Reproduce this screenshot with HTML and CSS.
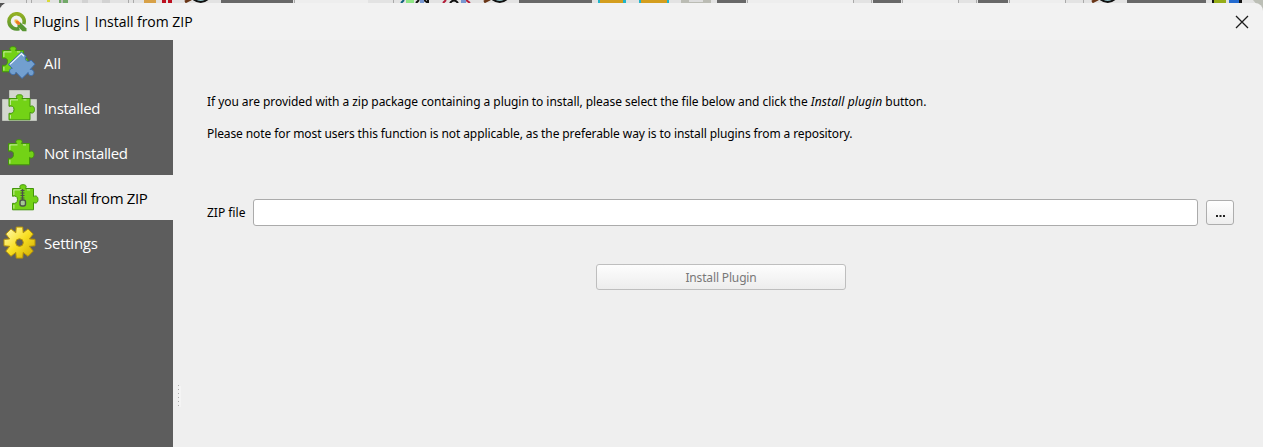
FILE: index.html
```
<!DOCTYPE html>
<html lang="en">
<head>
<meta charset="utf-8">
<title>Plugins | Install from ZIP</title>
<link rel="stylesheet" href="styles.css">
</head>
<body>
<svg class="defs" width="0" height="0" aria-hidden="true">
  <defs>
    <linearGradient id="gold" x1="0" y1="0" x2="1" y2="1"><stop offset="0.1" stop-color="#fff7a0"/><stop offset="0.5" stop-color="#f8df22"/><stop offset="1" stop-color="#cda800"/></linearGradient>
    <linearGradient id="qgreen" x1="0" y1="0" x2="0" y2="1"><stop offset="0" stop-color="#93b023"/><stop offset="1" stop-color="#589632"/></linearGradient>
    <path id="piece" d="M1.5 4.5H9.6C7.8 1.8 9.4 .7 12 .7S16.2 1.8 14.4 4.5H22.5V12.6C25 11 27 12.500 27 15.500S25 20 22.500 18.400V25.800H1.500V19.300C4.500 20 6.500 18.500 6.500 15.500S4.500 11.400 1.500 12.300Z"/>
    <path id="shine" d="M2.900 11V5.900H10.500M16 5.900H19M2.900 24.500V21" fill="none" stroke="#fff" stroke-opacity=".6" stroke-width="1"/>
  </defs>
</svg>
<div class="toolbar-strip">
  <svg width="1263" height="12" viewBox="0 0 1263 12" aria-hidden="true">
    <path fill="#e3e3e3" d="M0 0H1263V12H0Z"/>
    <path fill="#686868" d="M221 0h72v4h-72zM519 0h73v4h-73zM717 0h29v4h-29zM873 0h28v4h-28zM978 0h30v4h-30zM1127 0h79v4h-79z"/>
    <path fill="#eeeeee" d="M295 0h73v4h-73zM748 0h105v4H748zM903 0h55v4h-55zM1010 0h55v4h-55z"/>
    <path stroke="#aaa" d="M26.500 0v3M31.500 0v3M128.500 0v3M133.500 0v3M294.500 0v3M393.500 0v3M747.500 0v3M853.500 0v3M871.500 0v3M902.500 0v3M958.500 0v3M976.500 0v3M1009.500 0v3M1065.500 0v3M1083.500 0v3"/>
    <path fill="#d9db38" d="M47 0h3v2h-3z"/><path fill="#72a968" d="M59 0h9v3h-9z"/><path fill="#bdbdbd" d="M61 0h2v3h-2z"/><path fill="#d2d2d2" d="M82 0h6v3h-6zM102 0h8v3h-8z"/>
    <path fill="#d8a147" d="M144 0h12v3h-12z"/><path fill="#bd1020" d="M162 0h4v3h-4zM168 0h4v3h-4z"/>
    <g fill="none" stroke-width="2"><path stroke="#693516" stroke-width="3" d="M185 2l6-3M484 2l6-3M1092 2l6-3"/><path stroke="#111" fill="#8cb9bd" d="M193-1q8 6 15 0M492-1q8 6 15 0M1100-1q8 6 15 0"/><path stroke="#116080" d="M401 3l3-3"/><path stroke="#111" d="M416 3l3-3M424 0l4 3M428 3V0M450 3q4-5 8 0"/><path stroke="#b21c38" d="M443 3l3-3M466 0l4 3"/></g>
    <path fill="#8ee684" d="M406 0h8v3h-8z"/><path fill="#7897d1" d="M420 0h4v3h-4zM461 0h5v3h-5z"/>
    <path fill="#20b5ca" d="M598 0h28v3h-28zM639 0h30v3h-30z"/><path fill="#d49e1e" d="M600 0h23v3h-23zM641 0h26v3h-26z"/><path fill="#bbbcb4" d="M681 0h30v3h-30z"/><path fill="#ddd" d="M689 0h14v2h-14z"/>
    <path fill="#161616" d="M1212 0h30v3h-30z"/><path fill="#96ad18" d="M1214 0h12v3h-12z"/><path fill="#e3e3e3" d="M1226 0h3v3h-3z"/><path fill="#246bd0" d="M1229 0h10v3h-10z"/>
    <path fill="#bcbfb6" d="M1253 0h10v12z"/><path fill="#555" d="M0 3h5L0 8z"/>
  </svg>
</div>
<div class="dialog">
  <header class="titlebar">
    <svg class="logo" width="20" height="20" viewBox="0 0 20 20" aria-hidden="true"><path d="M12.300 16.500A7.600 7.600 0 1 1 16.700 12.100" fill="none" stroke="url(#qgreen)" stroke-width="3.600"/><path d="M10.500 10.500h3l6 5.900v2.800h-4l-5-5z" fill="#589632"/><path d="M7.500 7.500h2.700l2.700 2.700v2.600h-2.600L7.500 10z" fill="#f2b83f"/><path d="M9 9h2.200l1.800 1.700v1.900h-2.100L9 10.800z" fill="#ed7827"/></svg>
    <h1 class="title">Plugins | Install from ZIP</h1>
    <svg class="close" width="14" height="14" viewBox="0 0 14 14" aria-label="Close"><path d="M1 1l12 12M13 1L1 13" fill="none" stroke="#1c1c1c" stroke-width="1.300"/></svg>
  </header>
  <div class="body">
    <nav class="sidebar">
      <a class="item"><svg class="icon" width="40" height="45" viewBox="0 0 40 45" aria-hidden="true"><g transform="translate(1 6)" fill="#73d216" stroke="#42940b"><use href="#piece"/><use href="#shine"/></g><path d="M21.500 12L8.300 24.500 12.300 28.300C9.500 28.500 8.600 31.500 10.600 33.500S15.400 35 16 32.300L22 38.500 28.200 32.500C28.200 35.500 31.500 36.800 33.300 34.500S33 29 30.200 29.500L35 24.200 31 20C29.500 22.200 26.300 21.800 25.600 19.600S25.800 16.800 26.300 16.600Z" fill="#729fcf" stroke="#3d6daa"/><path d="M10 24.400L21.500 13.600 24 16.300" fill="none" stroke="#eef6ff" stroke-width="1.300"/></svg><span class="label all">All</span></a>
      <a class="item"><svg class="icon" width="40" height="45" viewBox="0 0 40 45" aria-hidden="true"><path d="M9.500 5.500h20v9h7v21h-34v-21h7z" fill="#d3d7cf" stroke="#bfc3bb"/><g transform="translate(7.500 9)" fill="#73d216" stroke="#42940b"><use href="#piece"/><use href="#shine"/></g></svg><span class="label installed">Installed</span></a>
      <a class="item"><svg class="icon" width="40" height="45" viewBox="0 0 40 45" aria-hidden="true"><g transform="translate(7 9)" fill="#73d216" stroke="#42940b"><use href="#piece"/><use href="#shine"/></g></svg><span class="label notinstalled">Not installed</span></a>
      <a class="item selected"><svg class="icon" width="40" height="45" viewBox="0 0 40 45" aria-hidden="true"><g transform="translate(7 9)" fill="#73d216" stroke="#42940b"><use href="#piece"/><use href="#shine"/></g><path d="M18.500 15v11" stroke="#4b5348" stroke-width="4" stroke-dasharray="1 1.500"/><path d="M18.500 14v11" stroke="#4b5348" stroke-width="1.300"/><rect x="16" y="25" width="5.500" height="6" rx="2" fill="#a5c795" stroke="#4b5348" stroke-width="1.400"/></svg><span class="label zip">Install from ZIP</span></a>
      <a class="item"><svg class="icon" width="40" height="45" viewBox="0 0 40 45" aria-hidden="true"><path fill-rule="evenodd" transform="translate(19.500 22.600)" fill="url(#gold)" stroke="#b99505" stroke-linejoin="round" d="M-3.200-15.500H3.200L3.700-9.800 8.500-13.700 13.700-8.500 9.800-3.700 15.500-3.200V3.200L9.800 3.700 13.700 8.500 8.500 13.700 3.700 9.800 3.200 15.500H-3.200L-3.700 9.800-8.500 13.700-13.700 8.500-9.800 3.700-15.500 3.200V-3.200L-9.800-3.700-13.700-8.500-8.500-13.700-3.700-9.800ZM0-3.800A3.800 3.800 0 1 0 0 3.800A3.800 3.800 0 1 0 0-3.800Z"/></svg><span class="label settings">Settings</span></a>
    </nav>
    <div class="splitter"><svg width="4" height="23" viewBox="0 0 4 23" aria-hidden="true"><path d="M1 1h2v21H1z" fill="#f4f4f4"/><path d="M.5 0v22" stroke="#aaa" stroke-dasharray="1 3"/></svg></div>
    <main class="content">
      <p class="text first">If you are provided with a zip package containing a plugin to install, please select the file below and click the <em>Install plugin</em> button.</p>
      <p class="text second">Please note for most users this function is not applicable, as the preferable way is to install plugins from a repository.</p>
      <div class="file-row">
        <label class="file-label" for="zip">ZIP file</label>
        <input id="zip" class="file-input" type="text">
        <button class="browse"><svg width="9" height="2" viewBox="0 0 9 2" aria-label="Browse"><path d="M0 0h2v2H0zM3.500 0h2v2h-2zM7 0h2v2H7z" fill="#222"/></svg></button>
      </div>
      <button class="install" disabled>Install Plugin</button>
    </main>
  </div>
</div>
</body>
</html>
```
FILE: styles.css
```
* { box-sizing: border-box; }
body { margin: 0; width: 1263px; height: 447px; overflow: hidden; background: #e3e3e3; color: #000; font-family: "Noto Sans", sans-serif; }
svg { display: block; flex: none; }
.defs { position: absolute; }
.toolbar-strip { height: 3px; }
.dialog { position: relative; height: 444px; background: #f2f2f2; border-radius: 8px 8px 0 0; overflow: hidden; }
.titlebar { height: 37px; display: flex; align-items: center; padding: 0 14px 0 7px; }
.title { margin: 0 auto 0 6px; font: 400 14px/20px "Open Sans", sans-serif; letter-spacing: -.03px; }
.body { display: flex; height: 407px; background: #efefef; }
.sidebar { width: 173px; background: #5d5d5d; }
.item { display: flex; align-items: center; height: 45px; color: #fff; font: 15px/22px "Open Sans", sans-serif; }
.label { margin-left: 4px; letter-spacing: -.38px; white-space: nowrap; }
.all { letter-spacing: 0; }
.settings { letter-spacing: -.25px; }
.selected { padding-left: 4px; background: #efefef; color: #000; }
.splitter { width: 10px; padding: 345px 0 0 5px; }
.content { display: flex; flex-direction: column; width: 1051px; margin-left: 24px; padding-top: 52px; }
.text { margin: 0; height: 20px; font-size: 12px; line-height: 20px; white-space: nowrap; }
.first { letter-spacing: -.055px; }
.first em { letter-spacing: .1px; }
.second { margin-top: 12px; letter-spacing: -.1px; }
.file-row { display: flex; align-items: center; height: 27px; margin-top: 55px; }
.file-label { width: 46px; font-size: 12px; white-space: nowrap; }
.file-input { width: 945px; height: 27px; border: 1px solid #ababab; border-radius: 3px; background: #fff; outline: 0; }
.browse { display: flex; justify-content: center; align-items: center; width: 28px; height: 25px; margin-left: 8px; padding: 6px 0 0; border: 1px solid #adadad; border-radius: 3px; background: linear-gradient(#fefefe, #eee); }
.install { width: 250px; height: 26px; margin: 38px 0 0 389px; padding: 2px 0 0; border: 1px solid #bebebe; border-radius: 3px; background: linear-gradient(#fdfdfd, #ededed); color: #787878; font: 12px/20px "Noto Sans", sans-serif; letter-spacing: -.15px; }
```
